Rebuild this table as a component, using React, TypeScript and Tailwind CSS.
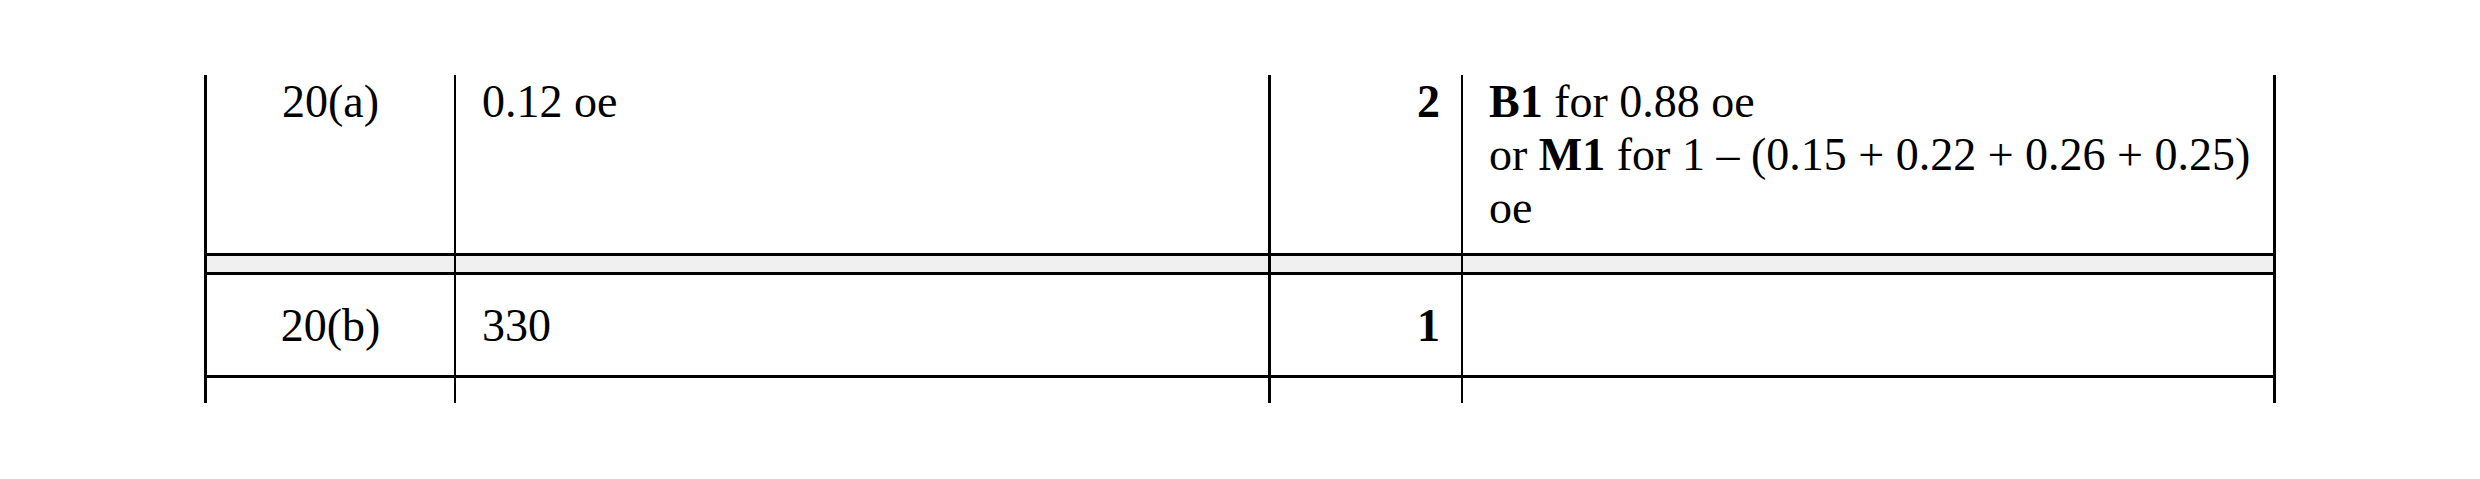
import React from "react";

const serif = { fontFamily: '"Liberation Serif", "Times New Roman", serif' };

export default function App() {
  return (
    <div
      className="w-[2480px] h-[479px] bg-white text-black overflow-hidden pl-[204px] pt-[75px] font-['Liberation_Serif',serif]"
      style={serif}
    >
      <div className="w-[2072px] text-[46px] leading-[53px]" style={serif}>
        {/* Row 1 */}
        <div className="grid grid-cols-[250px_814px_193px_815px] h-[178px]">
          <div className="border-l-[3px] border-black text-center">20(a)</div>
          <div className="border-l-2 border-black pl-[26px]" style={serif}>0.12 oe</div>
          <div className="border-l-[3px] border-black text-right pr-[21px] font-bold">2</div>
          <div className="border-l-2 border-r-[3px] border-black pl-[26px] pr-[10px]">
            <b>B1</b> for 0.88 oe
            <br />
            or <b>M1</b> for 1 – (0.15 + 0.22 + 0.26 + 0.25) oe
          </div>
        </div>
        {/* Separator band */}
        <div className="grid grid-cols-[250px_814px_193px_815px] h-[22px] border-y-[3px] border-black bg-[#f0f0f0]">
          <div className="border-l-[3px] border-black" />
          <div className="border-l-2 border-black" />
          <div className="border-l-[3px] border-black" />
          <div className="border-l-2 border-r-[3px] border-black" />
        </div>
        {/* Row 2 */}
        <div className="grid grid-cols-[250px_814px_193px_815px] h-[103px] border-b-[3px] border-black">
          <div className="border-l-[3px] border-black flex items-center justify-center">20(b)</div>
          <div className="border-l-2 border-black pl-[26px] flex items-center" style={serif}>330</div>
          <div className="border-l-[3px] border-black flex items-center justify-end pr-[21px] font-bold">1</div>
          <div className="border-l-2 border-r-[3px] border-black" />
        </div>
        {/* Row 3 partial */}
        <div className="grid grid-cols-[250px_814px_193px_815px] h-[25px]">
          <div className="border-l-[3px] border-black" />
          <div className="border-l-2 border-black" />
          <div className="border-l-[3px] border-black" />
          <div className="border-l-2 border-r-[3px] border-black" />
        </div>
      </div>
    </div>
  );
}
